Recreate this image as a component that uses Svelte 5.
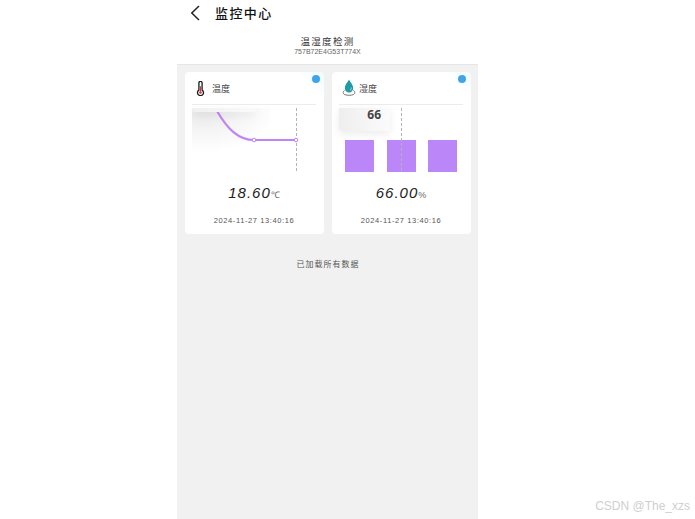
<script>
  const cards = [
    { name: '温度', value: '18.60', unit: '℃', kind: 'line' },
    { name: '湿度', value: '66.00', unit: '%', kind: 'bar' }
  ];
</script>

<div class="page">
  <main class="phone">
    <header class="nav">
      <svg class="back" width="12" height="16" viewBox="0 0 12 16"><path d="M10 1 2.800 8l7.200 7" fill="none" stroke="#222" stroke-width="1.500"/></svg>
      <h1>监控中心</h1>
    </header>
    <section class="device">
      <div class="dname">温湿度检测</div>
      <div class="did">757B72E4G53T774X</div>
    </section>
    <section class="body">
      <div class="grid">
        {#each cards as c}
          <article class="card" class:bar={c.kind === 'bar'}>
            <i class="dot"></i>
            <div class="head">
              {#if c.kind === 'line'}
                <svg class="ico" width="9" height="15" viewBox="0 0 10 17">
                  <path d="M3.200 2.200a1.800 1.800 0 0 1 3.600 0v8.100a3.400 3.400 0 1 1-3.600 0z" fill="#fff" stroke="#1c1c1c" stroke-width="1.500"/>
                  <path d="M5 6v6" stroke="#d33" stroke-width="1.200"/>
                  <circle cx="5" cy="13" r="1.500" fill="#d33"/>
                </svg>
              {:else}
                <svg class="ico" width="14" height="18" viewBox="0 0 14 18">
                  <path d="M7 .8C5 4 2.800 6 2.800 9.200a4.200 4.200 0 0 0 8.400 0C11.200 6 9 4 7 .8z" fill="#1f9ba3"/>
                  <path d="M9.200 8.500c.3 1.300-.3 2.500-1.300 3" fill="none" stroke="#bfe6e8" stroke-width=".8"/>
                  <path d="M2.500 11.500C.8 12.500.5 14.800 3 15.700c2.500.8 6 .8 8 0 2.500-.9 2.200-3.200.5-4.200" fill="none" stroke="#666" stroke-width=".9"/>
                </svg>
              {/if}
              <span>{c.name}</span>
            </div>
            <div class="chart">
              {#if c.kind === 'line'}
                <svg width="124" height="64" viewBox="0 0 124 64">
                  <defs>
                    <radialGradient id="sh" cx="0.150" cy="0" r="0.950">
                      <stop offset="0" stop-color="#e6e6e6"/>
                      <stop offset="0.500" stop-color="#f4f4f4"/>
                      <stop offset="1" stop-color="#fff"/>
                    </radialGradient>
                  </defs>
                  <rect width="78" height="46" fill="url(#sh)"/>
                  <path d="M104.500 0v64" stroke="#b4b4b4" stroke-width="1" stroke-dasharray="3 2"/>
                  <path d="M25 3C36 22 47 32 62 32H104" fill="none" stroke="#c084f5" stroke-width="2.200"/>
                  <circle cx="62" cy="32" r="1.800" fill="#fff" stroke="#c084f5"/>
                  <circle cx="104" cy="32" r="1.800" fill="#fff" stroke="#c084f5"/>
                </svg>
                <div class="tip tip-line"></div>
              {:else}
                <svg width="132" height="64" viewBox="0 0 132 64">
                  <rect x="6" y="32" width="29" height="32" fill="#bb87f8"/>
                  <rect x="48" y="32" width="29" height="32" fill="#bb87f8"/>
                  <rect x="89" y="32" width="29" height="32" fill="#bb87f8"/>
                  <path d="M62.500 0v64" stroke="#b4b4b4" stroke-width="1" stroke-dasharray="3 2"/>
                </svg>
                <div class="tip tip-bar">66</div>
              {/if}
            </div>
            <div class="value"><b>{c.value}</b><small>{c.unit}</small></div>
            <time>2024-11-27 13:40:16</time>
          </article>
        {/each}
      </div>
      <p class="end">已加载所有数据</p>
    </section>
  </main>
  <span class="mark">CSDN @The_xzs</span>
</div>

<style>
  :global(body) { margin: 0; background: #fff; }
  .page {
    position: relative;
    width: 695px;
    height: 519px;
    overflow: hidden;
    font-family: "Noto Sans CJK SC", "Liberation Sans", sans-serif;
    color: #222;
  }
  .phone {
    margin-left: 177px;
    width: 301px;
    height: 519px;
    display: flex;
    flex-direction: column;
  }
  .nav {
    height: 26px;
    display: flex;
    align-items: center;
    padding-left: 12px;
    gap: 14px;
  }
  .back { flex: none; }
  h1 {
    margin: 0;
    font-size: 13px;
    font-weight: 500;
    letter-spacing: 1.400px;
    line-height: 26px;
    color: #111;
  }
  .device {
    height: 39px;
    box-sizing: border-box;
    padding-top: 9px;
    text-align: center;
    border-bottom: 1px solid #e6e6e6;
  }
  .dname { font-size: 9.500px; line-height: 12px; letter-spacing: 1.300px; color: #333; }
  .did { font-size: 7px; line-height: 9px; color: #666; font-family: "Liberation Sans", sans-serif; }
  .body { flex: 1; background: #f1f1f1; padding: 7px 7px 0 8px; }
  .grid { display: grid; grid-template-columns: 139px 139px; gap: 8px; }
  .card {
    position: relative;
    height: 162px;
    box-sizing: border-box;
    background: #fff;
    border-radius: 4px;
    padding: 0 8px 0 7px;
    background-image: linear-gradient(225deg, #f0fafd 0, #fff 20px);
  }
  .dot {
    position: absolute;
    top: 3px;
    right: 4px;
    width: 8px;
    height: 8px;
    border-radius: 50%;
    background: #3ea6e8;
  }
  .bar .dot { right: 5px; }
  .head {
    height: 32px;
    display: flex;
    align-items: center;
    gap: 7px;
    padding: 0 0 0 4px;
    border-bottom: 1px solid #ececec;
    font-size: 9px;
    color: #444;
  }
  .bar .head { gap: 3px; padding-left: 3px; }
  .ico { flex: none; }
  .chart {
    position: relative;
    margin-top: 3px;
    height: 64px;
  }
  .chart svg { display: block; }
  .tip {
    position: absolute;
    top: 0;
    border-radius: 0 0 3px 3px;
    box-shadow: 0 3px 9px rgba(0, 0, 0, 0.08);
  }
  .tip-line {
    left: 0;
    width: 64px;
    height: 4px;
    background: linear-gradient(90deg, #f0f0f0, #fafafa);
  }
  .tip-bar {
    left: 0;
    width: 51px;
    height: 23px;
    padding-right: 9px;
    box-sizing: border-box;
    text-align: right;
    font: 700 12px/14px "Open Sans", sans-serif;
    color: #444;
    background: linear-gradient(90deg, #eee, #fbfbfb);
  }
  .value {
    margin-top: 12px;
    height: 18px;
    text-align: center;
    line-height: 18px;
    font-family: "Liberation Sans", sans-serif;
    color: #222;
  }
  .value b {
    font-weight: 400;
    font-style: italic;
    font-size: 15px;
    letter-spacing: 1px;
  }
  .value small { font-size: 9px; color: #666; }
  time {
    display: block;
    margin-top: 14px;
    text-align: center;
    font: 7.500px/10px "Liberation Sans", sans-serif;
    letter-spacing: 0.600px;
    color: #555;
  }
  .end {
    margin: 24px 0 0;
    text-align: center;
    font-size: 8px;
    line-height: 12px;
    letter-spacing: 1px;
    color: #555;
  }
  .mark {
    position: absolute;
    right: 5px;
    bottom: 6px;
    font: 12px/14px "Liberation Sans", sans-serif;
    color: #cfcfcf;
  }
</style>
